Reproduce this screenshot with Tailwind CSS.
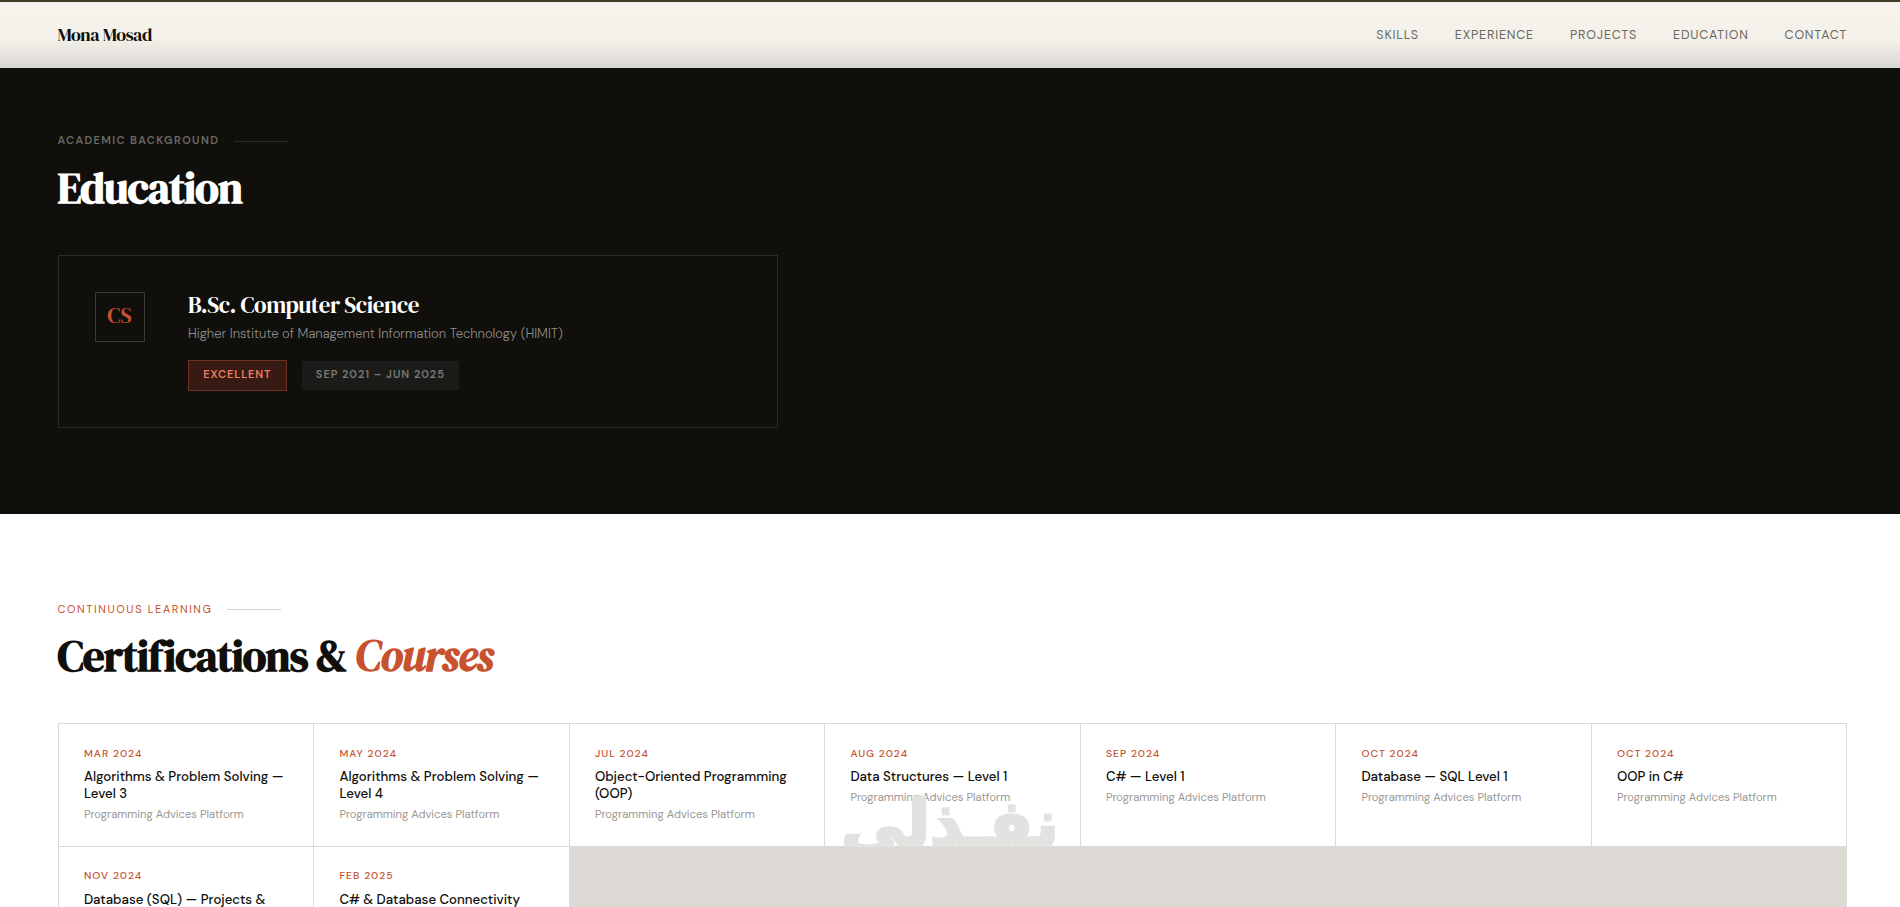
<!DOCTYPE html>
<html lang="en">
<head>
    <meta charset="UTF-8">
    <meta name="viewport" content="width=device-width, initial-scale=1.0">
    <title>Mona Mosad</title>
    <script src="https://cdn.jsdelivr.net/npm/@tailwindcss/browser@4"></script>
</head>
<body class="relative h-screen overflow-hidden bg-white font-['DM_Sans',Inter,sans-serif] text-[#100f0c]">

    <!-- Navbar -->
    <header class="flex h-[68px] items-center justify-between border-t-2 border-[#433d28] bg-linear-to-b from-[#f8f3ed] via-[#f4f1ea] via-55% to-[#d9d7d4] pl-[57.5px] pr-[52.8px]">
        <a href="#" class="pb-px font-['DM_Serif_Display','Liberation_Serif',serif] text-[18px] tracking-[-0.36px]">Mona Mosad</a>
        <nav class="flex gap-[36px] text-[12.5px] tracking-[0.82px] text-[#6b6963]">
            <a href="#skills">SKILLS</a>
            <a href="#experience">EXPERIENCE</a>
            <a href="#projects">PROJECTS</a>
            <a href="#education">EDUCATION</a>
            <a href="#contact">CONTACT</a>
        </nav>
    </header>

    <!-- Education -->
    <section id="education" class="h-[446px] bg-[#100f0c] pl-[57.5px] pt-[63px]">
        <div class="flex h-[18px] items-center gap-[14.5px] text-[11px] font-semibold tracking-[1.38px] text-[#6b6a65]">
            ACADEMIC BACKGROUND
            <span class="mt-[2px] h-px w-[54px] bg-[#2b2a27]"></span>
        </div>
        <h2 class="mt-[12px] font-['DM_Serif_Display','Liberation_Serif',serif] text-[43.2px] leading-[54px] font-bold tracking-[-0.864px] text-white">Education</h2>

        <div class="mt-[40px] flex h-[173px] w-[720px] gap-[43.4px] border border-[#2b2a28] p-[36px]">
            <div class="flex size-[50px] shrink-0 items-center justify-center border border-[#3a3937] pb-px font-['DM_Serif_Display','Liberation_Serif',serif] text-[21.6px] text-[#c9502f]">CS</div>
            <div>
                <h3 class="font-['DM_Serif_Display','Liberation_Serif',serif] text-[23px] leading-[26px] tracking-[-0.42px] text-white">B.Sc. Computer Science</h3>
                <p class="mt-[6px] text-[13px] leading-[20px] font-light text-[#8f8d89]">Higher Institute of Management Information Technology (HIMIT)</p>
                <div class="mt-[16px] flex items-center gap-[15px] text-[11px] font-semibold">
                    <span class="flex h-[31px] w-[99px] items-center justify-center border border-[#6d3322] bg-[#371a13] pb-[2px] tracking-[0.88px] text-[#ec7f62]">EXCELLENT</span>
                    <span class="flex h-[29px] w-[157px] items-center justify-center bg-[#1b1c1a] pb-[2px] tracking-[1px] text-[#7a7974]">SEP 2021 – JUN 2025</span>
                </div>
            </div>
        </div>
    </section>

    <!-- Certifications -->
    <section id="certifications" class="pl-[57.5px] pr-[53px] pt-[86px]">
        <div class="flex h-[18px] items-center gap-[14.6px] text-[11px] tracking-[1.6px] text-[#c4502e]">
            CONTINUOUS LEARNING
            <span class="mt-px h-px w-[54px] bg-[#d5d3ce]"></span>
        </div>
        <h2 class="mt-[11px] font-['DM_Serif_Display','Liberation_Serif',serif] text-[43.2px] leading-[54px] font-bold tracking-[-0.864px]">Certifications &amp; <em class="text-[#c8522e]">Courses</em></h2>

        <div class="mt-[40px] grid auto-rows-[122px] grid-cols-7 gap-px border border-[#dddad5] bg-[#dddad5]">
            <article class="bg-white px-[25.4px] pt-[21px]">
                <div class="text-[10.4px] leading-[17px] font-medium tracking-[1.04px] text-[#c4502e]">MAR 2024</div>
                <h4 class="mt-[6px] text-[13.28px] leading-[17px] font-medium whitespace-nowrap">Algorithms &amp; Problem Solving —<br>Level 3</h4>
                <p class="mt-[3px] text-[11.24px] leading-[18px] whitespace-nowrap text-[#9a9894]">Programming Advices Platform</p>
            </article>
            <article class="bg-white px-[25.4px] pt-[21px]">
                <div class="text-[10.4px] leading-[17px] font-medium tracking-[1.04px] text-[#c4502e]">MAY 2024</div>
                <h4 class="mt-[6px] text-[13.28px] leading-[17px] font-medium whitespace-nowrap">Algorithms &amp; Problem Solving —<br>Level 4</h4>
                <p class="mt-[3px] text-[11.24px] leading-[18px] whitespace-nowrap text-[#9a9894]">Programming Advices Platform</p>
            </article>
            <article class="bg-white px-[25.4px] pt-[21px]">
                <div class="text-[10.4px] leading-[17px] font-medium tracking-[1.04px] text-[#c4502e]">JUL 2024</div>
                <h4 class="mt-[6px] text-[13.28px] leading-[17px] font-medium whitespace-nowrap">Object-Oriented Programming<br>(OOP)</h4>
                <p class="mt-[3px] text-[11.24px] leading-[18px] whitespace-nowrap text-[#9a9894]">Programming Advices Platform</p>
            </article>
            <article class="bg-white px-[25.4px] pt-[21px]">
                <div class="text-[10.4px] leading-[17px] font-medium tracking-[1.04px] text-[#c4502e]">AUG 2024</div>
                <h4 class="mt-[6px] text-[13.28px] leading-[17px] font-medium whitespace-nowrap">Data Structures — Level 1</h4>
                <p class="mt-[3px] text-[11.24px] leading-[18px] whitespace-nowrap text-[#9a9894]">Programming Advices Platform</p>
            </article>
            <article class="bg-white px-[25.4px] pt-[21px]">
                <div class="text-[10.4px] leading-[17px] font-medium tracking-[1.04px] text-[#c4502e]">SEP 2024</div>
                <h4 class="mt-[6px] text-[13.28px] leading-[17px] font-medium whitespace-nowrap">C# — Level 1</h4>
                <p class="mt-[3px] text-[11.24px] leading-[18px] whitespace-nowrap text-[#9a9894]">Programming Advices Platform</p>
            </article>
            <article class="bg-white px-[25.4px] pt-[21px]">
                <div class="text-[10.4px] leading-[17px] font-medium tracking-[1.04px] text-[#c4502e]">OCT 2024</div>
                <h4 class="mt-[6px] text-[13.28px] leading-[17px] font-medium whitespace-nowrap">Database — SQL Level 1</h4>
                <p class="mt-[3px] text-[11.24px] leading-[18px] whitespace-nowrap text-[#9a9894]">Programming Advices Platform</p>
            </article>
            <article class="bg-white px-[25.4px] pt-[21px]">
                <div class="text-[10.4px] leading-[17px] font-medium tracking-[1.04px] text-[#c4502e]">OCT 2024</div>
                <h4 class="mt-[6px] text-[13.28px] leading-[17px] font-medium whitespace-nowrap">OOP in C#</h4>
                <p class="mt-[3px] text-[11.24px] leading-[18px] whitespace-nowrap text-[#9a9894]">Programming Advices Platform</p>
            </article>
            <article class="bg-white px-[25.4px] pt-[20px]">
                <div class="text-[10.4px] leading-[17px] font-medium tracking-[1.04px] text-[#c4502e]">NOV 2024</div>
                <h4 class="mt-[7px] text-[13.28px] leading-[17px] font-medium whitespace-nowrap">Database (SQL) — Projects &amp;</h4>
            </article>
            <article class="bg-white px-[25.4px] pt-[20px]">
                <div class="text-[10.4px] leading-[17px] font-medium tracking-[1.04px] text-[#c4502e]">FEB 2025</div>
                <h4 class="mt-[7px] text-[13.28px] leading-[17px] font-medium whitespace-nowrap">C# &amp; Database Connectivity</h4>
            </article>
        </div>
    </section>

    <!-- Watermark, cut off at the second row of the grid -->
    <div lang="ar" dir="rtl" class="pointer-events-none absolute top-[773px] left-[840px] flex h-[74px] w-[220px] justify-center overflow-hidden font-['DejaVu_Sans',sans-serif] text-[64px] leading-[102px] font-bold whitespace-nowrap text-[#e2e2e1] [-webkit-text-stroke:3px_#e2e2e1]">نفـذلى</div>
</body>
</html>
